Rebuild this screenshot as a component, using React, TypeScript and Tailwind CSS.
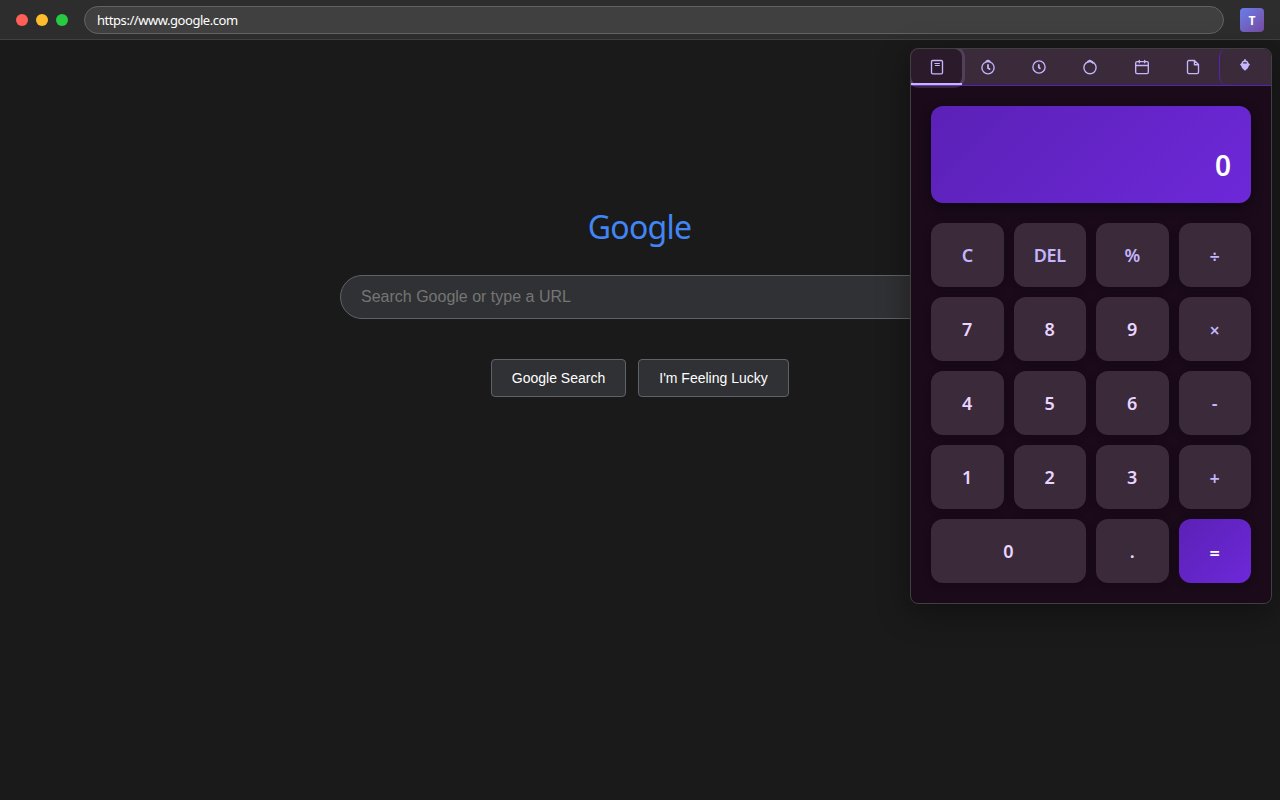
import type { ReactNode } from 'react';

function Icon({ children }: { children: ReactNode }) {
  return (
    <svg className="size-4" viewBox="0 0 16 16" fill="none" stroke="currentColor" strokeWidth="1.35" strokeLinecap="round" strokeLinejoin="round">
      {children}
    </svg>
  );
}

const tabs: ReactNode[] = [
  <Icon key="calc"><rect x="2.5" y="1.5" width="11" height="13.3" rx="1.3" /><path d="M5.8 4.5h4.6M6.4 6.5h4" strokeWidth="1.1" /></Icon>,
  <Icon key="timer"><circle cx="8" cy="8.7" r="6.1" /><path d="M8 5.9v3.2l1.6 1" strokeWidth="1.8" /><path d="M6 2.3 8 1.2l2 1.1z" fill="currentColor" strokeWidth="1.3" /></Icon>,
  <Icon key="clock"><circle cx="8" cy="8" r="6.1" /><path d="M7.8 5.9v2.4l1.1 1.1" strokeWidth="1.8" /></Icon>,
  <Icon key="watch"><circle cx="8" cy="8.6" r="6.1" /><path d="M6 2.5 7.8 1.6l1.8.9 1.3 1.3" strokeWidth="1.8" /></Icon>,
  <Icon key="cal"><rect x="1.7" y="2.6" width="12.6" height="12" rx="1.3" /><path d="M5.3 1.3v2.4M10.7 1.3v2.4M2 6.5h12" /></Icon>,
  <Icon key="doc"><path d="M9.4 1.5H3.9a1.4 1.4 0 0 0-1.4 1.4v10.3a1.4 1.4 0 0 0 1.4 1.4h8.2a1.4 1.4 0 0 0 1.4-1.4V5.6zM9.4 1.8v3.9h3.9" /></Icon>,
];

const keys = ['C', 'DEL', '%', '÷', '7', '8', '9', '×', '4', '5', '6', '-', '1', '2', '3', '+', '0', '.', '='];
const operators = ['÷', '×', '-', '+'];

function keyClass(k: string) {
  if (k === '=') return 'bg-linear-135 from-[#5b21b6] to-[#6d28d9] pt-[3px] text-white';
  if (k === 'C' || k === 'DEL' || k === '%') return 'bg-[#3b2a3a] text-[#c4b5fd] tracking-[-0.4px]';
  if (k === '-') return 'bg-[#3b2a3a] font-semibold text-[#c4b5fd]';
  if (operators.includes(k)) return 'bg-[#3b2a3a] pt-0.5 font-medium text-[#c4b5fd]';
  return 'bg-[#3b2a3a] font-semibold text-[#e9d5ff]';
}

export default function App() {
  return (
    <div className="relative flex h-screen flex-col overflow-hidden bg-[#1a1a1a] font-['Segoe_UI','Noto_Sans',sans-serif]">
      <header className="flex h-10 shrink-0 items-center border-b border-[#404040] bg-[#2d2d2d] px-4">
        <div className="flex gap-2">
          <span className="size-3 rounded-full bg-[#ff5f57]" />
          <span className="size-3 rounded-full bg-[#ffbd2e]" />
          <span className="size-3 rounded-full bg-[#28ca42]" />
        </div>
        <div className="mx-4 flex h-7 flex-1 items-center rounded-full border border-[#5f6368] bg-[#404040] px-3 pt-0.5 text-[13px] tracking-[-0.45px] text-white">
          https://www.google.com
        </div>
        <div className="flex size-6 items-center justify-center rounded bg-linear-135 from-[#667eea] to-[#764ba2] pt-0.5 text-xs font-bold text-white">T</div>
      </header>

      <main className="flex flex-col items-center pt-[165px]">
        <h1 className="pr-px text-[32px] leading-[43px] tracking-[-0.75px] text-[#4285f4]">Google</h1>
        <input
          className="mt-[27px] h-11 w-[600px] rounded-full border border-[#5f6368] bg-[#303134] px-5 font-['Liberation_Sans',sans-serif] text-base text-white placeholder:text-[#757575]"
          placeholder="Search Google or type a URL"
        />
        <div className="mt-10 flex gap-3 font-['Liberation_Sans',sans-serif] text-sm text-white">
          <button className="h-[38px] w-[135px] rounded border border-[#5f6368] bg-[#303134]">Google Search</button>
          <button className="h-[38px] w-[151px] rounded border border-[#5f6368] bg-[#303134]">I'm Feeling Lucky</button>
        </div>
      </main>

      <section className="absolute top-12 right-2 h-[556px] w-[362px] overflow-hidden rounded-lg border border-[#404040] bg-[#1a0a1a] shadow-[0_8px_32px_rgba(0,0,0,0.4)]">
        <nav className="flex h-[37px] border-b border-[#5b21b6] bg-[#3b2a3a] text-[#c4b5fd]">
          {tabs.map((icon, i) => (
            <button
              key={i}
              className={
                i === 0
                  ? 'relative flex h-9 flex-1 items-center justify-center rounded-lg bg-[#2b1a2a] shadow-[0_0_0_3px_rgba(196,181,253,0.16)] after:absolute after:inset-x-0 after:bottom-0 after:h-0.5 after:bg-[#c4b5fd]'
                  : 'flex h-9 flex-1 items-center justify-center'
              }
            >
              {icon}
            </button>
          ))}
          <button className="flex h-9 flex-1 items-center justify-center rounded-l-lg border-l border-[#5b21b6] pb-1">
            <svg className="h-3 w-3" viewBox="0 0 12 12" fill="currentColor">
              <path d="M5.3 0h1.4v1.3L8.9 2.4 9.4 4 11 5.6 9.6 7.2 9 9 6 11.8 3 9 2.4 7.2 1 5.6 2.6 4l.5-1.6 2.2-1.1z" />
              <path d="M4.2 3.3h3.6v1.1H4.2z" fill="#3b2a3a" />
            </svg>
          </button>
        </nav>
        <div className="p-5">
          <div className="flex h-[97px] items-end justify-end rounded-xl bg-linear-135 from-[#5b21b6] to-[#6d28d9] px-5 pb-[19px] text-[28px] leading-[38px] font-semibold text-white shadow-[0_4px_12px_rgba(0,0,0,0.4)]">
            0
          </div>
          <div className="mt-5 grid grid-cols-4 gap-2.5">
            {keys.map((k) => (
              <button key={k} className={`h-16 rounded-xl text-lg font-semibold shadow-[0_2px_8px_rgba(0,0,0,0.2)] ${k === '0' ? 'col-span-2' : ''} ${keyClass(k)}`}>
                {k}
              </button>
            ))}
          </div>
        </div>
      </section>
    </div>
  );
}
